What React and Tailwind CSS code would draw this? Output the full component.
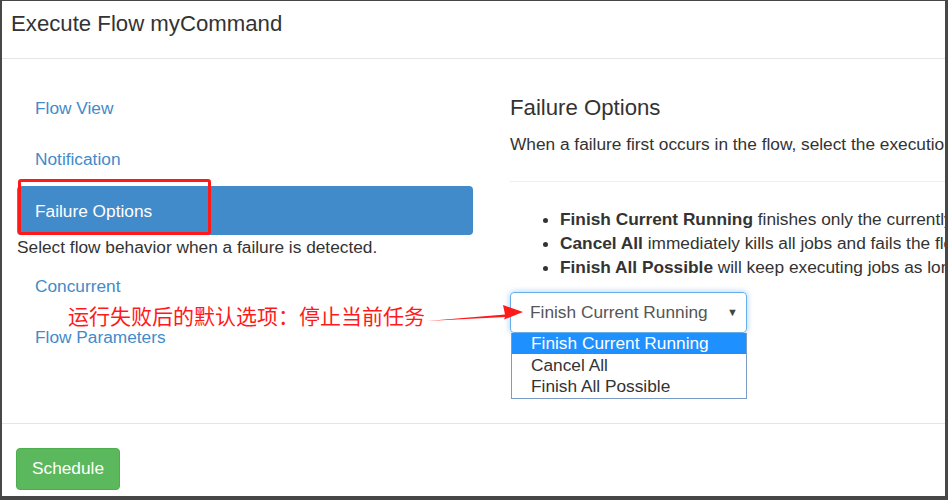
export default function App() {
  const font = { fontFamily: '"Liberation Sans", Arial, "Noto Sans CJK SC", sans-serif' }

  return (
    <div className="w-[948px] h-[500px] bg-[#474747] pt-px pl-[2px] pr-[3px] pb-[4px]" style={font}>
      <div className="relative w-full h-full bg-white overflow-hidden flex flex-col text-[#333]">
        {/* Header */}
        <div className="h-[58px] shrink-0 border-b border-[#e5e5e5] pl-[9px] pt-[10px]">
          <h4 className="text-[22.2px] leading-[26px] whitespace-nowrap">Execute Flow myCommand</h4>
        </div>

        {/* Body */}
        <div className="h-[364px] shrink-0 flex">
          {/* Left nav */}
          <div className="w-[456px] ml-[15px] shrink-0 pt-[25px] flex flex-col text-[17.3px]">
            <a className="h-[49px] flex items-center pl-[18px] text-[#428bca]">Flow View</a>
            <a className="h-[49px] mt-[2px] flex items-center pl-[18px] text-[#428bca]">Notification</a>
            <a className="h-[49px] mt-[2px] pt-[2px] flex items-center pl-[18px] rounded-[4px] bg-[#428bca] text-white">Failure Options</a>
            <p className="h-[25px] flex items-center whitespace-nowrap">Select flow behavior when a failure is detected.</p>
            <a className="h-[49px] mt-[2px] flex items-center pl-[18px] text-[#428bca]">Concurrent</a>
            <a className="h-[49px] mt-[2px] flex items-center pl-[18px] text-[#428bca]">Flow Parameters</a>
          </div>

          {/* Right panel */}
          <div className="ml-[37px] flex-1 min-w-0 pt-[36px] text-[17.3px]">
            <h3 className="text-[22.2px] leading-[26px] whitespace-nowrap">Failure Options</h3>
            <p className="mt-[11px] leading-[24px] whitespace-nowrap">
              When a failure first occurs in the flow, select the execution behavior for any executing jobs.
            </p>
            <hr className="mt-[25px] border-t border-[#eee]" />
            <ul className="mt-[25px] pl-[50px] list-disc leading-[24px] whitespace-nowrap">
              <li><strong>Finish Current Running</strong> finishes only the currently running job.</li>
              <li><strong>Cancel All</strong> immediately kills all jobs and fails the flow.</li>
              <li><strong>Finish All Possible</strong> will keep executing jobs as long as dependencies are met.</li>
            </ul>

            <div className="mt-[13px] w-[237px]">
              <div className="h-[41px] rounded-[4px] border border-[#66afe9] shadow-[0_0_6px_rgba(102,175,233,0.6)] flex items-center pl-[19px] pr-[8px]">
                <span className="flex-1 text-[#555]">Finish Current Running</span>
                <span className="text-[11px] text-[#444]">▼</span>
              </div>
              <div className="ml-px w-[236px] border border-[#7a9cc6] border-t-0 leading-[21px]">
                <div className="bg-[#1e90ff] text-white pl-[19px] h-[21px] flex items-center">Finish Current Running</div>
                <div className="pl-[19px] h-[22px] flex items-center text-[#333]">Cancel All</div>
                <div className="pl-[19px] h-[22px] pb-[1px] flex items-center text-[#333]">Finish All Possible</div>
              </div>
            </div>
          </div>
        </div>

        {/* Footer */}
        <div className="flex-1 border-t border-[#e5e5e5] pl-[14px] pt-[24px]">
          <button className="w-[104px] h-[42px] rounded-[4px] bg-[#5cb85c] border border-[#4cae4c] text-white text-[17.3px]">
            Schedule
          </button>
        </div>

        {/* Annotation overlay */}
        <div className="absolute left-[16px] top-[178px] w-[193px] h-[56px] border-[3px] border-[#ff1a1a] rounded-[3px] pointer-events-none" />
        <div
          className="absolute left-[66px] top-[301px] text-[21px] leading-[26px] text-[#ff1a1a] whitespace-nowrap"
          style={{ fontFamily: '"Noto Sans CJK SC", sans-serif' }}
        >
          运行失败后的默认选项：停止当前任务
        </div>
        <svg className="absolute left-0 top-0 pointer-events-none" width="943" height="495">
          <polygon
            points="425,320 503,313.5 501,304 521,311 502,318.5 503,316"
            fill="#ff1a1a"
          />
        </svg>
      </div>
    </div>
  )
}
